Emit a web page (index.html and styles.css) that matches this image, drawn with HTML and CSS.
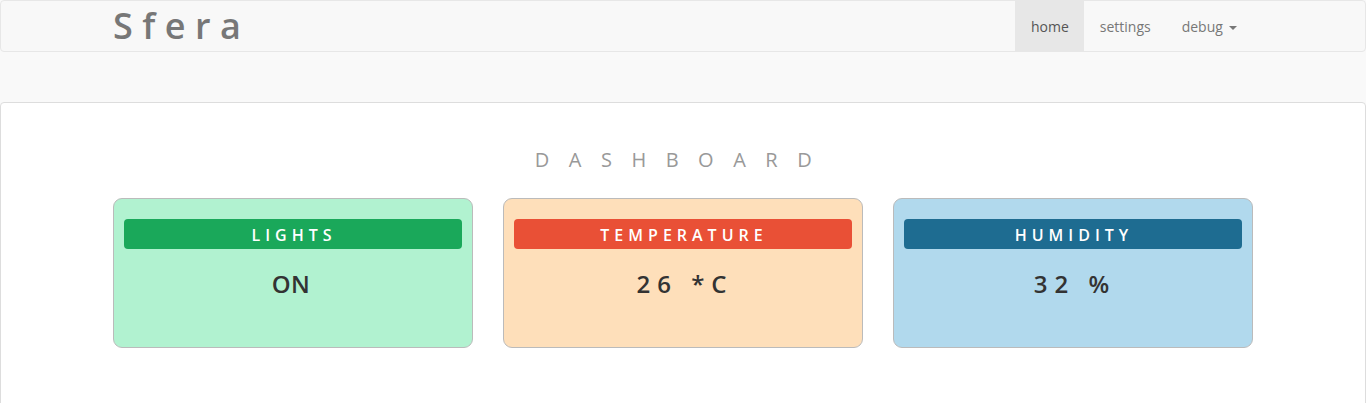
FILE: index.html
```html
<!DOCTYPE html>
<html>
<head>
<meta charset="utf-8">
<title>Sfera</title>
<link rel="stylesheet" href="styles.css">
</head>
<body>
<nav class="navbar">
  <div class="container nav-inner">
    <a class="brand" href="#">Sfera</a>
    <ul class="nav-links">
      <li><a class="active" href="#">home</a></li>
      <li><a href="#">settings</a></li>
      <li><a href="#">debug <span class="caret"></span></a></li>
    </ul>
  </div>
</nav>
<main class="panel">
  <h2 class="title">DASHBOARD</h2>
  <div class="container cards">
    <div class="card card-green">
      <div class="card-head">LIGHTS</div>
      <div class="card-value state">ON</div>
    </div>
    <div class="card card-orange">
      <div class="card-head">TEMPERATURE</div>
      <div class="card-value num">26 *C</div>
    </div>
    <div class="card card-blue">
      <div class="card-head">HUMIDITY</div>
      <div class="card-value num">32 %</div>
    </div>
  </div>
</main>
</body>
</html>
```

FILE: styles.css
```css
* { box-sizing: border-box; }
html, body { margin: 0; padding: 0; }
body {
  background: #f9f9f9;
  font-family: "Open Sans", "Liberation Sans", sans-serif;
  font-size: 14px;
  color: #333;
}
.container {
  width: 1170px;
  margin: 0 auto;
  padding: 0 15px;
}
.navbar {
  background: #f8f8f8;
  border: 1px solid #e7e7e7;
  border-radius: 4px;
  height: 52px;
  margin-bottom: 50px;
}
.nav-inner {
  display: flex;
  align-items: center;
  justify-content: space-between;
  height: 50px;
}
.brand {
  font-size: 36px;
  font-weight: 600;
  letter-spacing: 9.5px;
  color: #777;
  text-decoration: none;
  line-height: 50px;
}
.nav-links {
  list-style: none;
  display: flex;
  margin: 0 1px 0 0;
  padding: 0;
  height: 50px;
}
.nav-links a {
  display: block;
  padding: 16px 15.5px 14px;
  line-height: 20px;
  color: #777;
  text-decoration: none;
}
.nav-links a.active {
  background: #e7e7e7;
  color: #555;
}
.caret {
  display: inline-block;
  width: 0;
  height: 0;
  margin-left: 2px;
  vertical-align: middle;
  border-top: 4px solid #777;
  border-left: 4px solid transparent;
  border-right: 4px solid transparent;
}
.panel {
  background: #fff;
  border: 1px solid #ddd;
  border-radius: 4px;
  padding: 42px 0 60px;
}
.title {
  margin: 0 0 23px;
  text-align: center;
  font-size: 20px;
  line-height: 30px;
  font-weight: 400;
  letter-spacing: 19.5px;
  color: #999;
}
.cards {
  display: grid;
  grid-template-columns: repeat(3, 360px);
  column-gap: 30px;
}
.card {
  height: 150px;
  border: 1px solid #bbb;
  border-radius: 9px;
  padding: 20px 10px;
}
.card-head {
  height: 30px;
  line-height: 32px;
  border-radius: 4px;
  color: #fff;
  text-align: center;
  font-size: 16px;
  font-weight: 600;
  letter-spacing: 5px;
  text-indent: 2px;
}
.card-value {
  margin-top: 17px;
  text-align: center;
  font-size: 24px;
  line-height: 36px;
  font-weight: 600;
  color: #333;
}
.card-value.state {
  letter-spacing: 0.5px;
  text-indent: -4px;
}
.card-value.num {
  letter-spacing: 7px;
  text-indent: 4px;
}
.card-green { background: #b1f2d0; }
.card-green .card-head { background: #1aa85a; }
.card-orange { background: #fedfba; }
.card-orange .card-head { background: #e95036; }
.card-blue { background: #b1d9ed; }
.card-blue .card-head { background: #1e6c91; }
```
